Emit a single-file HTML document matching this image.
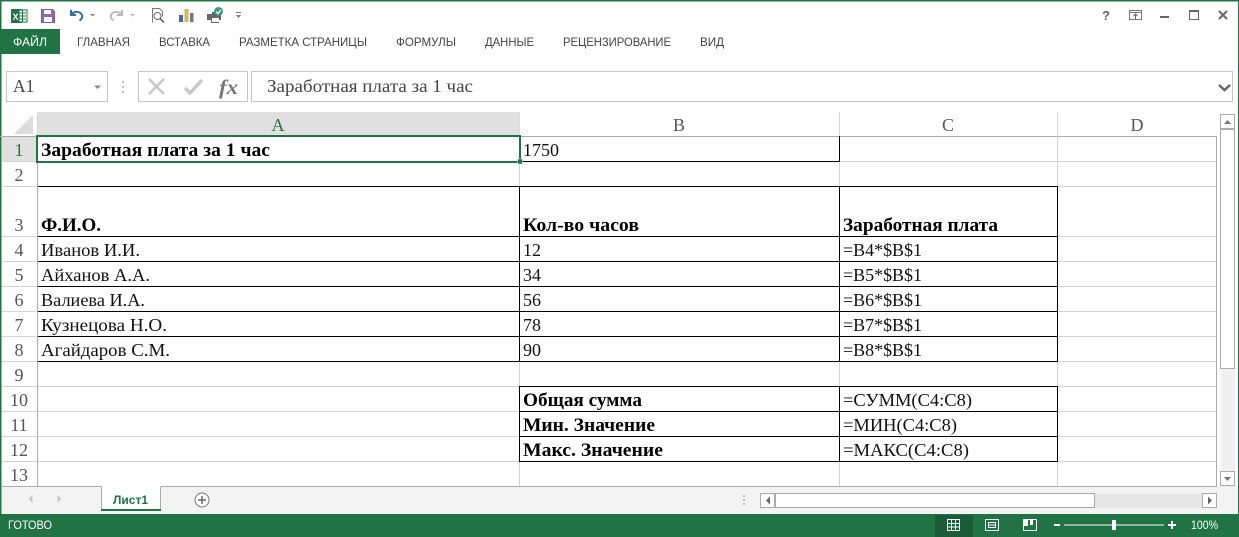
<!DOCTYPE html>
<html lang="ru"><head><meta charset="utf-8"><title>Excel</title>
<style>
html,body{margin:0;padding:0;background:#fff;width:1239px;height:537px;overflow:hidden}
svg{display:block}
.s{font-family:"Liberation Sans",sans-serif}
.t{font-family:"Liberation Serif",serif;font-size:18px;fill:#111}
.b{font-weight:bold;font-size:18.5px;fill:#000}
.h{font-family:"Liberation Serif",serif;font-size:18px;fill:#555;text-anchor:middle}
.m{font-family:"Liberation Sans",sans-serif;font-size:11.7px;fill:#444}
</style></head><body>
<svg width="1239" height="537" viewBox="0 0 1239 537" xmlns="http://www.w3.org/2000/svg">
<rect width="1239" height="537" fill="#fff"/>
<!-- window frame -->
<rect x="0" y="0" width="1239" height="1.5" fill="#217346"/>
<rect x="0" y="0" width="1.5" height="537" fill="#217346"/>
<rect x="1238" y="0" width="1" height="537" fill="#217346"/>

<!-- QAT -->
<rect x="11" y="9" width="11" height="14" fill="#217346"/>
<rect x="19" y="10" width="8" height="12" fill="#fff" stroke="#217346"/>
<path d="M19 13h7M19 16h7M19 19h7M22.500 10v12" stroke="#217346" stroke-width="1"/>
<text x="12.500" y="20" font-family="Liberation Sans" font-weight="bold" font-size="9" fill="#fff">X</text>
<path d="M41.500 9.500h11l2 2v11h-13z" fill="#8e6aa8" stroke="#7a5a98"/>
<rect x="44" y="10" width="7" height="4" fill="#fff"/>
<rect x="44" y="17" width="8" height="5" fill="#fff"/>
<path d="M71 10v5h5" fill="none" stroke="#2f6ea5" stroke-width="2"/>
<path d="M71.500 14.500c3-4 9-3 10.500 .5c.7 2-.3 4-2.500 5.500" fill="none" stroke="#2f6ea5" stroke-width="2"/>
<path d="M90 14h5l-2.500 2.500z" fill="#888"/>
<path d="M122 10v5h-5" fill="none" stroke="#bbb" stroke-width="2"/>
<path d="M121.500 14.500c-3-4-9-3-10.500 .5c-.7 2 .3 4 2.500 5.500" fill="none" stroke="#bbb" stroke-width="2"/>
<path d="M130 14h5l-2.500 2.500z" fill="#bbb"/>
<path d="M152.500 22.500v-14h7l3 3v5" fill="none" stroke="#777"/>
<circle cx="157.500" cy="16" r="3.500" fill="#fff" stroke="#666"/>
<path d="M160 18.500l4 4" stroke="#555" stroke-width="1.500"/>
<rect x="179" y="15" width="4" height="7" fill="#44699b"/>
<rect x="184.500" y="9" width="4" height="13" fill="#d9b45f"/>
<rect x="190" y="13" width="3.500" height="9" fill="#777"/>
<path d="M207 14h5v-2h4v2h5v6h-2v3h-8v-3h-4z" fill="#666"/>
<rect x="212" y="18" width="7" height="4" fill="#fff"/>
<circle cx="218.500" cy="11.500" r="4.500" fill="#3e9a82"/>
<path d="M216 11.500l2 2 3-3.500" fill="none" stroke="#fff" stroke-width="1.200"/>
<rect x="236" y="12" width="5" height="1" fill="#777"/>
<path d="M236 15h5l-2.500 3z" fill="#777"/>

<!-- window controls -->
<text x="1106" y="20" font-family="Liberation Sans" font-weight="bold" font-size="13" fill="#666" text-anchor="middle">?</text>
<rect x="1129.500" y="10.500" width="12" height="9" fill="none" stroke="#777"/>
<path d="M1129.500 12.500h12" stroke="#777"/>
<path d="M1135.500 19v-5M1133.500 16l2-2 2 2" fill="none" stroke="#666"/>
<rect x="1160" y="16" width="9" height="2" fill="#666"/>
<rect x="1189.500" y="10.500" width="9" height="9" fill="none" stroke="#666"/>
<rect x="1189" y="10" width="10" height="2" fill="#666"/>
<path d="M1219 11l8 8M1227 11l-8 8" stroke="#666" stroke-width="2"/>

<!-- Ribbon tabs -->
<rect x="0" y="29" width="60" height="25" fill="#217346"/>
<text class="s" x="13" y="46" font-size="11.700" fill="#fff" textLength="34" lengthAdjust="spacingAndGlyphs">ФАЙЛ</text>
<text class="m" x="77" y="46" textLength="53" lengthAdjust="spacingAndGlyphs">ГЛАВНАЯ</text>
<text class="m" x="159" y="46" textLength="51" lengthAdjust="spacingAndGlyphs">ВСТАВКА</text>
<text class="m" x="239" y="46" textLength="128" lengthAdjust="spacingAndGlyphs">РАЗМЕТКА СТРАНИЦЫ</text>
<text class="m" x="396" y="46" textLength="60" lengthAdjust="spacingAndGlyphs">ФОРМУЛЫ</text>
<text class="m" x="485" y="46" textLength="49" lengthAdjust="spacingAndGlyphs">ДАННЫЕ</text>
<text class="m" x="563" y="46" textLength="108" lengthAdjust="spacingAndGlyphs">РЕЦЕНЗИРОВАНИЕ</text>
<text class="m" x="700" y="46" textLength="24" lengthAdjust="spacingAndGlyphs">ВИД</text>

<!-- Formula bar -->
<rect x="6.500" y="71.500" width="101" height="30" fill="#fff" stroke="#c6c6c6"/>
<text x="13" y="92" font-family="Liberation Serif" font-size="17.500" fill="#444">A1</text>
<path d="M94 85.500h7l-3.500 3.500z" fill="#888"/>
<path d="M123 81v2M123 86v2M123 91v2" stroke="#aaa" stroke-width="1.500"/>
<rect x="138.500" y="71.500" width="109" height="30" fill="#fff" stroke="#c6c6c6"/>
<path d="M149 79l15 15M164 79l-15 15" stroke="#c8c8c8" stroke-width="2.500"/>
<path d="M185 88l5 5 12-13" fill="none" stroke="#c8c8c8" stroke-width="3.500"/>
<text x="219" y="94" font-family="Liberation Serif" font-style="italic" font-weight="bold" font-size="21" fill="#777" textLength="19" lengthAdjust="spacingAndGlyphs">fx</text>
<rect x="251.500" y="71.500" width="981" height="30" fill="#fff" stroke="#c6c6c6"/>
<text x="267" y="92" font-family="Liberation Serif" font-size="17.500" fill="#444" textLength="206" lengthAdjust="spacingAndGlyphs">Заработная плата за 1 час</text>
<path d="M1219 85l5.500 5 5.500-5" fill="none" stroke="#666" stroke-width="2.500"/>

<!-- Headers -->
<path d="M33 115v19h-19z" fill="#dcdcdc"/>
<rect x="38" y="112" width="481" height="24" fill="#e0e0e0"/>
<rect x="2" y="137" width="35" height="24" fill="#e0e0e0"/>
<path d="M519.500 112v24M839.500 112v24M1057.500 112v24M37.500 112v24" stroke="#d8d8d8"/>
<path d="M0 136.500h1216.500" stroke="#ababab"/>
<path d="M37.500 136v350" stroke="#ababab"/>
<path d="M2 161.500h35M2 186.500h35M2 236.500h35M2 261.500h35M2 286.500h35M2 311.500h35M2 336.500h35M2 361.500h35M2 386.500h35M2 411.500h35M2 436.500h35M2 461.500h35" stroke="#d4d4d4"/>
<text class="h" x="278" y="131" style="fill:#217346">A</text>
<text class="h" x="679" y="131">B</text>
<text class="h" x="948" y="131">C</text>
<text class="h" x="1137" y="131">D</text>
<text class="h" x="19" y="156" style="fill:#217346">1</text>
<text class="h" x="19" y="181">2</text>
<text class="h" x="19" y="231">3</text>
<text class="h" x="19" y="256">4</text>
<text class="h" x="19" y="281">5</text>
<text class="h" x="19" y="306">6</text>
<text class="h" x="19" y="331">7</text>
<text class="h" x="19" y="356">8</text>
<text class="h" x="19" y="381">9</text>
<text class="h" x="19" y="406">10</text>
<text class="h" x="19" y="431">11</text>
<text class="h" x="19" y="456">12</text>
<text class="h" x="19" y="481">13</text>

<!-- Gridlines -->
<path d="M38 161.500h1179M38 186.500h1179M38 236.500h1179M38 261.500h1179M38 286.500h1179M38 311.500h1179M38 336.500h1179M38 361.500h1179M38 386.500h1179M38 411.500h1179M38 436.500h1179M38 461.500h1179" stroke="#d4d4d4"/>
<path d="M519.500 136v350M839.500 136v350M1057.500 136v350" stroke="#d4d4d4"/>
<path d="M1216.500 136v351" stroke="#ababab"/>

<!-- Black borders -->
<path d="M520 161.500h320M839.500 136v26" stroke="#000"/>
<path d="M38 186.500h1020M38 236.500h1020M38 261.500h1020M38 286.500h1020M38 311.500h1020M38 336.500h1020M38 361.500h1020" stroke="#000"/>
<path d="M519.500 186v176M839.500 186v176M1057.500 186v176" stroke="#000"/>
<path d="M519 386.500h539M519 411.500h539M519 436.500h539M519 461.500h539M519.500 386v76M839.500 386v76M1057.500 386v76" stroke="#000"/>

<!-- Selection -->
<rect x="37" y="136" width="483" height="26" fill="none" stroke="#217346" stroke-width="2"/>
<rect x="517.500" y="159" width="5" height="5" fill="#217346" stroke="#fff" stroke-width=".5"/>

<!-- Cell text -->
<text class="t b" x="41" y="156" textLength="229" lengthAdjust="spacingAndGlyphs">Заработная плата за 1 час</text>
<text class="t" x="523" y="156" textLength="36" lengthAdjust="spacingAndGlyphs">1750</text>
<text class="t b" x="41" y="231" textLength="60" lengthAdjust="spacingAndGlyphs">Ф.И.О.</text>
<text class="t b" x="523" y="231" textLength="116" lengthAdjust="spacingAndGlyphs">Кол-во часов</text>
<text class="t b" x="843" y="231" textLength="155" lengthAdjust="spacingAndGlyphs">Заработная плата</text>
<text class="t" x="41" y="256" textLength="99" lengthAdjust="spacingAndGlyphs">Иванов И.И.</text>
<text class="t" x="41" y="281" textLength="109" lengthAdjust="spacingAndGlyphs">Айханов А.А.</text>
<text class="t" x="41" y="306" textLength="104" lengthAdjust="spacingAndGlyphs">Валиева И.А.</text>
<text class="t" x="41" y="331" textLength="126" lengthAdjust="spacingAndGlyphs">Кузнецова Н.О.</text>
<text class="t" x="41" y="356" textLength="129" lengthAdjust="spacingAndGlyphs">Агайдаров С.М.</text>
<text class="t" x="523" y="256">12</text>
<text class="t" x="523" y="281">34</text>
<text class="t" x="523" y="306">56</text>
<text class="t" x="523" y="331">78</text>
<text class="t" x="523" y="356">90</text>
<text class="t" x="843" y="256" textLength="79" lengthAdjust="spacingAndGlyphs">=B4*$B$1</text>
<text class="t" x="843" y="281" textLength="79" lengthAdjust="spacingAndGlyphs">=B5*$B$1</text>
<text class="t" x="843" y="306" textLength="79" lengthAdjust="spacingAndGlyphs">=B6*$B$1</text>
<text class="t" x="843" y="331" textLength="79" lengthAdjust="spacingAndGlyphs">=B7*$B$1</text>
<text class="t" x="843" y="356" textLength="79" lengthAdjust="spacingAndGlyphs">=B8*$B$1</text>
<text class="t b" x="523" y="406" textLength="119" lengthAdjust="spacingAndGlyphs">Общая сумма</text>
<text class="t b" x="523" y="431" textLength="132" lengthAdjust="spacingAndGlyphs">Мин. Значение</text>
<text class="t b" x="523" y="456" textLength="140" lengthAdjust="spacingAndGlyphs">Макс. Значение</text>
<text class="t" x="843" y="406" textLength="129" lengthAdjust="spacingAndGlyphs">=СУММ(C4:C8)</text>
<text class="t" x="843" y="431" textLength="114" lengthAdjust="spacingAndGlyphs">=МИН(C4:C8)</text>
<text class="t" x="843" y="456" textLength="126" lengthAdjust="spacingAndGlyphs">=МАКС(C4:C8)</text>

<!-- Vertical scrollbar -->
<rect x="1221" y="114" width="14" height="373" fill="#f0f0f0"/>
<rect x="1220.500" y="114.500" width="14" height="14" fill="#fff" stroke="#ababab"/>
<path d="M1224 124h7l-3.500-4z" fill="#777"/>
<rect x="1220.500" y="129.500" width="14" height="239" fill="#fff" stroke="#ababab"/>
<rect x="1220.500" y="471.500" width="14" height="14" fill="#fff" stroke="#ababab"/>
<path d="M1224 477h7l-3.500 4z" fill="#777"/>

<!-- Sheet tabs row -->
<rect x="2" y="487" width="1235" height="27" fill="#f3f3f3"/>
<path d="M2 486.500h1215" stroke="#ababab"/>
<path d="M32.500 495v8l-4-4z" fill="#c8c8c8"/>
<path d="M57.500 495v8l4-4z" fill="#c8c8c8"/>
<rect x="101.500" y="486" width="59" height="24" fill="#fff"/>
<path d="M101.500 487v23M160.500 487v23" stroke="#ababab"/>
<rect x="101" y="509" width="60" height="2" fill="#217346"/>
<text class="s" x="113" y="504" font-size="12" font-weight="bold" fill="#217346" textLength="35" lengthAdjust="spacingAndGlyphs">Лист1</text>
<circle cx="202" cy="500" r="7" fill="#fff" stroke="#777"/>
<path d="M198 500h8M202 496v8" stroke="#666" stroke-width="1.500"/>
<path d="M744 495v2M744 499v2M744 503v2" stroke="#aaa" stroke-width="1.500"/>
<rect x="761" y="494" width="455" height="14" fill="#e6e6e6"/>
<rect x="760.500" y="493.500" width="14" height="14" fill="#fff" stroke="#ababab"/>
<path d="M770 496.500v8l-4-4z" fill="#666"/>
<rect x="775.500" y="493.500" width="319" height="14" fill="#fff" stroke="#ababab"/>
<rect x="1202.500" y="493.500" width="14" height="14" fill="#fff" stroke="#ababab"/>
<path d="M1208 496.500v8l4-4z" fill="#666"/>

<!-- Status bar -->
<rect x="0" y="514" width="1239" height="23" fill="#217346"/>
<text class="s" x="8" y="529" font-size="11.500" fill="#fff" textLength="44" lengthAdjust="spacingAndGlyphs">ГОТОВО</text>
<rect x="935" y="515" width="38" height="22" fill="#1a5c38"/>
<path d="M947.500 519.500h12v11h-12zM951.500 519.500v11M955.500 519.500v11M947.500 523.500h12M947.500 527h12" fill="none" stroke="#fff"/>
<rect x="985.500" y="519.500" width="13" height="11" fill="none" stroke="#fff"/>
<path d="M988.500 522.500h7v5h-7z M988.500 525h7" fill="none" stroke="#fff"/>
<path d="M1023.500 519.500h13v11h-13z" fill="none" stroke="#fff"/>
<path d="M1023 519h5v7h-5zM1030 519h3v6h-3z" fill="#fff"/>
<rect x="1054" y="524" width="6" height="2" fill="#fff"/>
<rect x="1064" y="524.500" width="100" height="1" fill="#fff"/>
<rect x="1112" y="520" width="4" height="10" fill="#fff"/>
<path d="M1168 525h8M1172 521v8" stroke="#fff" stroke-width="2"/>
<text class="s" x="1191" y="529" font-size="11.500" fill="#fff" textLength="27" lengthAdjust="spacingAndGlyphs">100%</text>
</svg>
</body></html>
